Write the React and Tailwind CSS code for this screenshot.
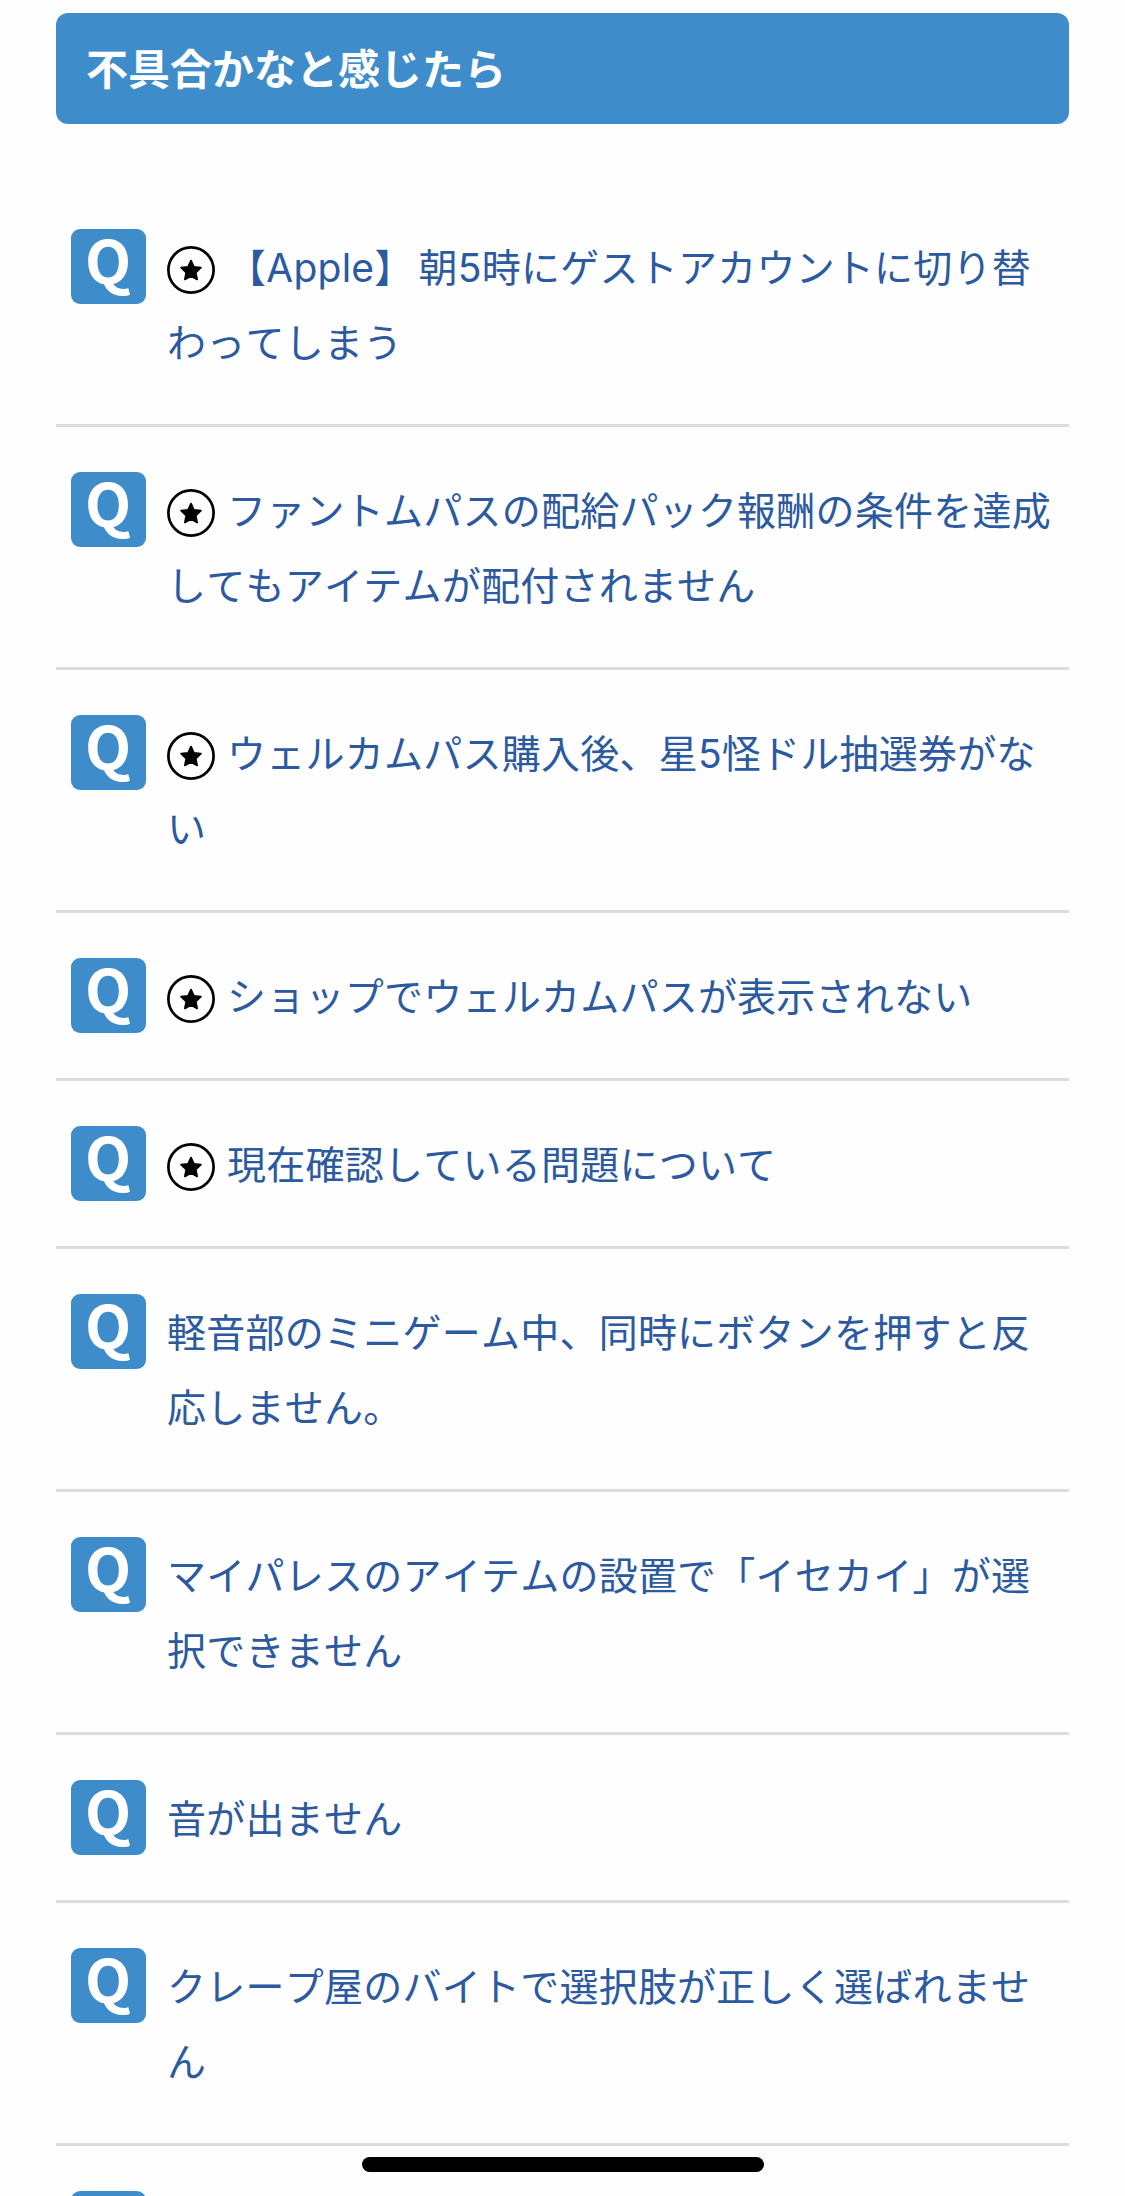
import React from "react";

const questions = [
  {
    star: true,
    lines: [
      <>
        【Apple】<span className="ml-[5px]">朝5時にゲストアカウントに切り替</span>
      </>,
      "わってしまう",
    ],
  },
  { star: true, lines: ["ファントムパスの配給パック報酬の条件を達成", "してもアイテムが配付されません"] },
  { star: true, lines: ["ウェルカムパス購入後、星5怪ドル抽選券がな", "い"] },
  { star: true, lines: ["ショップでウェルカムパスが表示されない"] },
  { star: true, lines: ["現在確認している問題について"] },
  { lines: ["軽音部のミニゲーム中、同時にボタンを押すと反", "応しません。"] },
  { lines: ["マイパレスのアイテムの設置で「イセカイ」が選", "択できません"] },
  { lines: ["音が出ません"] },
  { lines: ["クレープ屋のバイトで選択肢が正しく選ばれませ", "ん"] },
];

const StarIcon = () => (
  <svg viewBox="0 0 48 48" className="mt-[7px] mr-[12px] size-12 shrink-0">
    <circle cx="24" cy="24" r="22.6" fill="none" stroke="black" strokeWidth="2.7" />
    <path
      d="M24 14.6l2.9 6.3 7 .8-5.2 4.8 1.4 6.9-6.1-3.4-6.1 3.4 1.4-6.9-5.2-4.8 7-.8z"
      fill="black"
      stroke="black"
      strokeWidth="1.8"
      strokeLinejoin="round"
    />
  </svg>
);

const Question = ({ star, lines }) => (
  <li className="flex border-b-[3px] border-[#dcdcdc] py-[45px] pl-[15px]">
    <span className="mr-[21px] flex h-[75px] w-[75px] shrink-0 justify-center rounded-[9px] bg-[#3f8ccb] pr-px font-['Noto_Sans_CJK_JP',sans-serif] text-[60px] leading-[57px] font-bold text-white">
      Q
    </span>
    <a className="block text-[39px] leading-[75px] tracking-[0.24px] whitespace-nowrap text-[#2c5aa0] [font-kerning:none]">
      {lines.map((line, i) => (
        <span key={i} className="flex h-[75px] items-center">
          {star && i === 0 && <StarIcon />}
          <span className="pt-[2px]">{line}</span>
        </span>
      ))}
    </a>
  </li>
);

const App = () => {
  return (
    <main className="relative h-[2196px] w-[1125px] overflow-hidden bg-[#fefefe] px-14 pt-[13px] font-[Inter,'Noto_Sans_CJK_JP',sans-serif]">
      <h2 className="h-[111px] w-[1013px] rounded-xl bg-[#3f8ccb] pl-[30px] text-[42px] leading-[113px] font-semibold text-white [font-kerning:none]">
        不具合かなと感じたら
      </h2>
      <ul className="mt-[60px] w-[1013px]">
        {questions.map((q, i) => (
          <Question key={i} star={q.star} lines={q.lines} />
        ))}
        {/* next row, only the top of its badge is on screen */}
        <li className="pt-[45px] pl-[15px]">
          <div className="h-[75px] w-[75px] rounded-[9px] bg-[#3f8ccb]"></div>
        </li>
      </ul>
      {/* home indicator */}
      <div className="absolute top-[2157px] left-[362px] h-[15px] w-[402px] rounded-full bg-black"></div>
    </main>
  );
};

export default App;
